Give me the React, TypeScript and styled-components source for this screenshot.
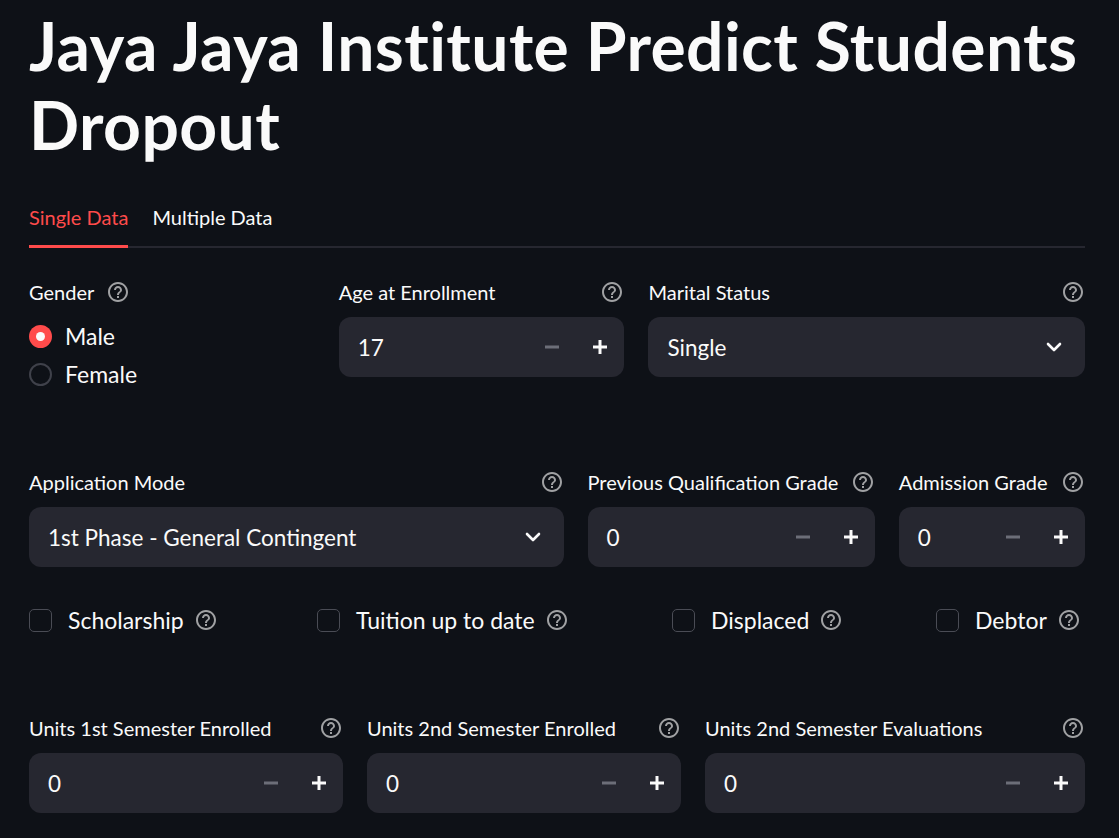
import React from "react";
import styled, { createGlobalStyle } from "styled-components";

const GlobalStyle = createGlobalStyle`
  html, body {
    margin: 0;
    background: #0e1117;
  }
  body {
    font-family: "Lato", "Noto Sans", sans-serif;
    color: #fafafa;
  }
  * { box-sizing: border-box; }
`;

//#region STYLED COMPONENTS

const Page = styled.div`
  padding: 0 34px 0 29px;
  width: 1119px;
  height: 838px;
  overflow: hidden;
`;

const Title = styled.h1`
  margin: 0;
  padding-top: 6px;
  font-size: 66px;
  line-height: 79px;
  font-weight: 700;
  letter-spacing: 0.4px;
  color: #fafafa;
`;

const TabList = styled.div`
  display: flex;
  gap: 24px;
  margin-top: 38px;
  border-bottom: 2px solid #262730;
`;

const Tab = styled.div<{ $active?: boolean }>`
  font-size: 20px;
  line-height: 30px;
  padding-bottom: 13px;
  margin-bottom: -2px;
  color: ${(p) => (p.$active ? "#ff4b4b" : "#fafafa")};
  border-bottom: 3px solid ${(p) => (p.$active ? "#ff4b4b" : "transparent")};
`;

const Row = styled.div<{ $cols: string; $top: number }>`
  display: grid;
  grid-template-columns: ${(p) => p.$cols};
  column-gap: 24px;
  margin-top: ${(p) => p.$top}px;
  align-items: start;
`;

const Field = styled.div`
  display: flex;
  flex-direction: column;
  min-width: 0;
`;

const LabelRow = styled.div<{ $inline?: boolean }>`
  display: flex;
  align-items: center;
  justify-content: ${(p) => (p.$inline ? "flex-start" : "space-between")};
  gap: 12px;
  height: 24px;
  margin-bottom: 13px;
  font-size: 20px;
  white-space: nowrap;
`;

const InputBox = styled.div`
  display: flex;
  align-items: center;
  height: 60px;
  background: #262730;
  border-radius: 12px;
  padding-left: 19px;
`;

const InputValue = styled.div`
  flex: 1;
  font-size: 22.5px;
  white-space: nowrap;
`;

const StepButton = styled.div`
  width: 48px;
  height: 100%;
  display: flex;
  align-items: center;
  justify-content: center;
`;

const ChevronWrap = styled.div`
  width: 62px;
  display: flex;
  justify-content: center;
  align-items: center;
`;

const RadioGroup = styled.div`
  display: flex;
  flex-direction: column;
`;

const RadioItem = styled.div`
  display: flex;
  align-items: center;
  gap: 13px;
  height: 38px;
  font-size: 23px;
`;

const RadioDot = styled.div<{ $checked?: boolean }>`
  width: 23px;
  height: 23px;
  border-radius: 50%;
  display: flex;
  align-items: center;
  justify-content: center;
  background: ${(p) => (p.$checked ? "#ff4b4b" : "#0e1117")};
  border: ${(p) => (p.$checked ? "none" : "2px solid #3f414a")};
  &::after {
    content: "";
    display: ${(p) => (p.$checked ? "block" : "none")};
    width: 9px;
    height: 9px;
    border-radius: 50%;
    background: #fafafa;
  }
`;

const CheckItem = styled.div`
  display: flex;
  align-items: center;
  height: 28px;
  font-size: 23px;
  white-space: nowrap;
`;

const CheckBox = styled.div`
  width: 23px;
  height: 23px;
  border-radius: 5px;
  border: 1.5px solid #4a4c55;
  margin-right: 16px;
  flex-shrink: 0;
`;

const HelpWrap = styled.span<{ $gap?: number }>`
  display: inline-flex;
  margin-left: ${(p) => p.$gap ?? 0}px;
`;

//#endregion

const HelpIcon = ({ gap }: { gap?: number }) => (
  <HelpWrap $gap={gap}>
    <svg width="24" height="24" viewBox="0 0 24 24" fill="rgba(250,250,250,0.62)">
      <path d="M11 18h2v-2h-2v2zm1-16C6.48 2 2 6.48 2 12s4.48 10 10 10 10-4.48 10-10S17.52 2 12 2zm0 18c-4.41 0-8-3.59-8-8s3.59-8 8-8 8 3.59 8 8-3.59 8-8 8zm0-14c-2.21 0-4 1.79-4 4h2c0-1.1.9-2 2-2s2 .9 2 2c0 2-3 1.75-3 5h2c0-2.25 3-2.5 3-5 0-2.21-1.79-4-4-4z" />
    </svg>
  </HelpWrap>
);

const NumberInput = ({ label, value }: { label: string; value: string }) => (
  <Field>
    <LabelRow>
      <span>{label}</span>
      <HelpIcon />
    </LabelRow>
    <InputBox>
      <InputValue>{value}</InputValue>
      <StepButton>
        <svg width="14" height="14" viewBox="0 0 14 14">
          <rect x="0" y="5.5" width="14" height="3" fill="#6c6e78" />
        </svg>
      </StepButton>
      <StepButton>
        <svg width="14" height="14" viewBox="0 0 14 14">
          <rect x="0" y="5.5" width="14" height="3" fill="#fafafa" />
          <rect x="5.5" y="0" width="3" height="14" fill="#fafafa" />
        </svg>
      </StepButton>
    </InputBox>
  </Field>
);

const SelectInput = ({ label, value }: { label: string; value: string }) => (
  <Field>
    <LabelRow>
      <span>{label}</span>
      <HelpIcon />
    </LabelRow>
    <InputBox>
      <InputValue>{value}</InputValue>
      <ChevronWrap>
        <svg width="16" height="10" viewBox="0 0 16 10">
          <polyline points="2,2 8,8 14,2" fill="none" stroke="#fafafa" strokeWidth="2.6" strokeLinecap="round" strokeLinejoin="round" />
        </svg>
      </ChevronWrap>
    </InputBox>
  </Field>
);

const Check = ({ label }: { label: string }) => (
  <CheckItem>
    <CheckBox />
    <span>{label}</span>
    <HelpIcon gap={10} />
  </CheckItem>
);

export default function App() {
  return (
    <Page>
      <GlobalStyle />
      <Title>Jaya Jaya Institute Predict Students Dropout</Title>

      <TabList>
        <Tab $active>Single Data</Tab>
        <Tab>Multiple Data</Tab>
      </TabList>

      <Row $cols="286fr 286fr 437fr" $top={32}>
        <Field>
          <LabelRow $inline>
            <span>Gender</span>
            <HelpIcon />
          </LabelRow>
          <RadioGroup>
            <RadioItem>
              <RadioDot $checked />
              <span>Male</span>
            </RadioItem>
            <RadioItem>
              <RadioDot />
              <span>Female</span>
            </RadioItem>
          </RadioGroup>
        </Field>
        <NumberInput label="Age at Enrollment" value="17" />
        <SelectInput label="Marital Status" value="Single" />
      </Row>

      <Row $cols="534fr 287fr 186fr" $top={77}>
        <SelectInput label="Application Mode" value="1st Phase - General Contingent" />
        <NumberInput label="Previous Qualification Grade" value="0" />
        <NumberInput label="Admission Grade" value="0" />
      </Row>

      <Row $cols="264px 331px 240px 149px" $top={39}>
        <Check label="Scholarship" />
        <Check label="Tuition up to date" />
        <Check label="Displaced" />
        <Check label="Debtor" />
      </Row>

      <Row $cols="314fr 314fr 380fr" $top={82}>
        <NumberInput label="Units 1st Semester Enrolled" value="0" />
        <NumberInput label="Units 2nd Semester Enrolled" value="0" />
        <NumberInput label="Units 2nd Semester Evaluations" value="0" />
      </Row>
    </Page>
  );
}
